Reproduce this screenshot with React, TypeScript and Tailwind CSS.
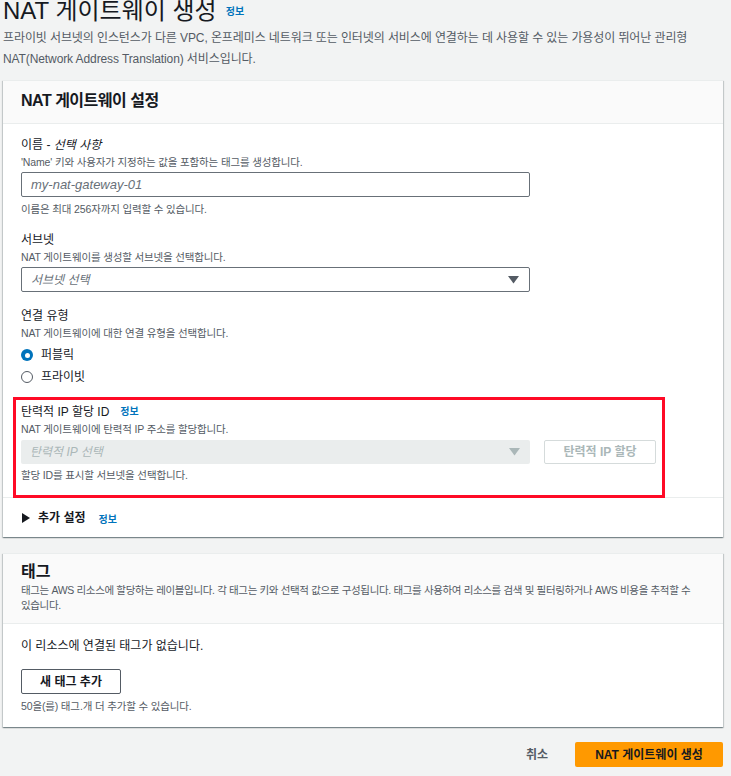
const font = "font-['Liberation_Sans','Noto_Sans_CJK_KR',sans-serif] [font-feature-settings:'palt']";
const small = "text-[10.5px] leading-[16px] tracking-[-0.15px] text-[#545b64]";
const label = "text-[12px] leading-[18px]";
const cardShadow =
  "bg-white border-t border-[#eaeded] shadow-[0_1px_1px_0_rgba(0,28,36,0.3),1px_1px_1px_0_rgba(0,28,36,0.15),-1px_1px_1px_0_rgba(0,28,36,0.15)]";

const Caret = ({ muted = false }: { muted?: boolean }) => (
  <svg width="11" height="8" viewBox="0 0 11 8" className={muted ? "fill-[#aab7b8]" : "fill-[#545b64]"}>
    <path d="M0 0h11L5.5 7.5z" />
  </svg>
);

const Info = () => <span className="text-[10px] font-bold text-[#0073bb]">정보</span>;

const App = () => {
  return (
    <div className={`${font} bg-[#f2f3f3] min-h-[776px] w-[731px] pl-[3px] pr-[8px] text-[#16191f] overflow-hidden`}>
      {/* page title */}
      <div className="flex items-end gap-[9px] -mt-[3px]">
        <h1 className="text-[24px] leading-[28px]">NAT 게이트웨이 생성</h1>
        <span className="mb-[3px]"><Info /></span>
      </div>
      <p className="mt-[3px] text-[12px] leading-[21px] tracking-[-0.1px] text-[#545b64]">
        프라이빗 서브넷의 인스턴스가 다른 VPC, 온프레미스 네트워크 또는 인터넷의 서비스에 연결하는 데 사용할 수 있는 가용성이 뛰어난 관리형 NAT(Network Address Translation) 서비스입니다.
      </p>

      {/* settings card */}
      <div className={`mt-[10px] ${cardShadow}`}>
        <div className="bg-[#fafafa] border-b border-[#eaeded] h-[43px] flex items-center px-[18px] pb-[3px]">
          <h2 className="text-[16px] font-bold tracking-[-0.5px]">NAT 게이트웨이 설정</h2>
        </div>
        <div className="px-[18px] pt-[12px]">
          <div className={label}>이름 - <i>선택 사항</i></div>
          <div className={small}>'Name' 키와 사용자가 지정하는 값을 포함하는 태그를 생성합니다.</div>
          <div className="mt-[2px] w-[509px] h-[25px] border border-[#687078] rounded-[2px] flex items-center px-[9px] text-[13px] italic text-[#687078]">my-nat-gateway-01</div>
          <div className={`mt-[4px] ${small}`}>이름은 최대 256자까지 입력할 수 있습니다.</div>

          <div className={`mt-[14px] ${label}`}>서브넷</div>
          <div className={small}>NAT 게이트웨이를 생성할 서브넷을 선택합니다.</div>
          <div className="mt-[2px] w-[509px] h-[25px] border border-[#687078] rounded-[2px] flex items-center justify-between pl-[9px] pr-[10px] text-[12px] italic text-[#687078]">
            <span>서브넷 선택</span>
            <Caret />
          </div>

          <div className={`mt-[15px] ${label}`}>연결 유형</div>
          <div className={small}>NAT 게이트웨이에 대한 연결 유형을 선택합니다.</div>
          <div className="mt-[3px] flex flex-col">
            <label className="h-[22px] flex items-center gap-[8px] text-[12px]">
              <span className="w-[12px] h-[12px] rounded-full bg-[#0073bb] flex items-center justify-center">
                <span className="w-[5px] h-[5px] rounded-full bg-white" />
              </span>
              퍼블릭
            </label>
            <label className="h-[22px] flex items-center gap-[8px] text-[12px]">
              <span className="w-[12px] h-[12px] rounded-full border border-[#545b64] bg-white" />
              프라이빗
            </label>
          </div>

          {/* highlighted allocation field */}
          <div className="relative mt-[9px] -ml-[8px] w-[652px] border-[3px] border-[#ff0a26] pl-[5px] pt-[3px] pb-[12px]">
            <div className={`flex items-center gap-[11px] ${label}`}>
              탄력적 IP 할당 ID <Info />
            </div>
            <div className={small}>NAT 게이트웨이에 탄력적 IP 주소를 할당합니다.</div>
            <div className="mt-[3px] flex items-center gap-[14px]">
              <div className="w-[509px] h-[24px] bg-[#eaeded] rounded-[2px] flex items-center justify-between pl-[9px] pr-[10px] text-[12px] italic text-[#aab7b8]">
                <span>탄력적 IP 선택</span>
                <Caret muted />
              </div>
              <div className="w-[112px] h-[24px] border border-[#d5dbdb] rounded-[2px] flex items-center justify-center text-[12px] font-bold text-[#aab7b8]">탄력적 IP 할당</div>
            </div>
            <div className={`mt-[3px] ${small}`}>할당 ID를 표시할 서브넷을 선택합니다.</div>
          </div>
        </div>
        <div className="-mt-[1px] border-t border-[#eaeded] h-[40px] px-[19px] flex items-center">
          <svg width="8" height="10" viewBox="0 0 8 10" className="fill-[#16191f]"><path d="M0 0l8 5-8 5z" /></svg>
          <span className="ml-[8px] text-[12px] font-bold">추가 설정</span>
          <span className="ml-[13px]"><Info /></span>
        </div>
      </div>

      {/* tags card */}
      <div className={`mt-[16px] ${cardShadow}`}>
        <div className="bg-[#fafafa] border-b border-[#eaeded] px-[18px] pt-[7px] pb-[10px]">
          <h2 className="text-[16px] leading-[22px] font-bold">태그</h2>
          <p className="text-[10.5px] leading-[15px] tracking-[-0.35px] text-[#545b64]">
            <span className="whitespace-nowrap">태그는 AWS 리소스에 할당하는 레이블입니다. 각 태그는 키와 선택적 값으로 구성됩니다. 태그를 사용하여 리소스를 검색 및 필터링하거나 AWS 비용을 추적할 수</span>
            <br />
            있습니다.
          </p>
        </div>
        <div className="px-[18px] pt-[12px] pb-[13px]">
          <div className="text-[12px] leading-[20px]">이 리소스에 연결된 태그가 없습니다.</div>
          <button className="mt-[13px] w-[100px] h-[25px] border border-[#545b64] rounded-[2px] bg-white text-[12px] font-bold text-[#16191f]">새 태그 추가</button>
          <div className={`mt-[4px] ${small}`}>50을(를) 태그.개 더 추가할 수 있습니다.</div>
        </div>
      </div>

      {/* footer actions */}
      <div className="mt-[15px] flex items-center justify-end gap-[27px]">
        <button className="text-[12px] font-bold text-[#545b64]">취소</button>
        <button className="w-[148px] h-[25px] bg-[#ff9900] rounded-[2px] text-[12px] font-bold text-[#16191f]">NAT 게이트웨이 생성</button>
      </div>
    </div>
  );
};

export default App;
